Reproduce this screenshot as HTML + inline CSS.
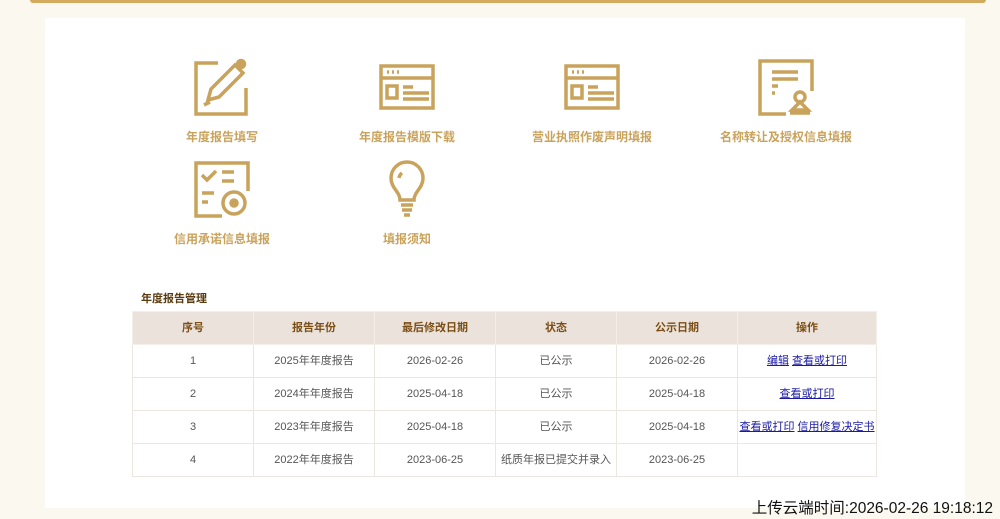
<!DOCTYPE html>
<html><head><meta charset="utf-8"><style>
*{margin:0;padding:0;box-sizing:border-box}
body{width:1000px;height:519px;background:#fbf8ef;font-family:"Liberation Sans","Noto Sans CJK SC",sans-serif;position:relative;overflow:hidden}
.bar{position:absolute;left:30px;top:0;width:956px;height:3px;background:#d4aa5e;border-radius:0 0 3px 3px}
.panel{position:absolute;left:45px;top:18px;width:920px;height:490px;background:#fff}
.item{position:absolute;width:200px;text-align:center;color:#c9a35c;font-size:12px;font-weight:bold}
.item svg{display:block;margin:0 auto}
.title{position:absolute;left:141px;top:290px;font-size:11px;font-weight:bold;color:#5a3a10}
table{position:absolute;left:132px;top:311px;border-collapse:collapse;font-size:11px;color:#555}
td,th{border:1px solid #ece6e0;text-align:center;height:33px;width:121px;padding:0;line-height:14px;vertical-align:middle}
th{background:#ebe3db;color:#7b4e16;font-weight:bold;border-color:#f3eee8}
th:last-child,td:last-child{width:139px}
a{color:#1a1aa6;text-decoration:underline}
.time{position:absolute;right:7px;top:496px;font-size:15.5px;color:#111}
</style></head><body>
<div class="bar"></div>
<div class="panel"></div>
<div class="item" style="left:122px;top:58px"><svg width="60" height="60" viewBox="0 0 60 60" fill="none" stroke="#c9a35c" stroke-width="3.5"><path d="M26 5H4v51h50V30"/><path d="M16 42l3-11 24-24 8 8-24 24z"/><path d="M12 47l6-3"/><circle cx="49" cy="6" r="3.5" fill="#c9a35c"/></svg><div style="margin-top:10px">年度报告填写</div></div>
<div class="item" style="left:307px;top:58px"><svg width="60" height="60" viewBox="0 0 60 60" fill="none" stroke="#c9a35c" stroke-width="3.5"><rect x="4" y="8" width="52" height="42"/><path d="M4 20h52M10 14h2M15 14h2M20 14h2M10 28h10v12H10zM26 29h10M26 35h26M26 41h26"/></svg><div style="margin-top:10px">年度报告模版下载</div></div>
<div class="item" style="left:492px;top:58px"><svg width="60" height="60" viewBox="0 0 60 60" fill="none" stroke="#c9a35c" stroke-width="3.5"><rect x="4" y="8" width="52" height="42"/><path d="M4 20h52M10 14h2M15 14h2M20 14h2M10 28h10v12H10zM26 29h10M26 35h26M26 41h26"/></svg><div style="margin-top:10px">营业执照作废声明填报</div></div>
<div class="item" style="left:686px;top:58px"><svg width="60" height="60" viewBox="0 0 60 60" fill="none" stroke="#c9a35c" stroke-width="3.5"><path d="M30 56H4V3h52v30"/><path d="M16 14h26M16 21h26M16 28h6M16 35h3"/><circle cx="44" cy="39" r="5"/><path d="M44 44l-8 8h16z M34 55h20"/></svg><div style="margin-top:10px">名称转让及授权信息填报</div></div>
<div class="item" style="left:122px;top:160px"><svg width="60" height="60" viewBox="0 0 60 60" fill="none" stroke="#c9a35c" stroke-width="3.5"><path d="M30 56H4V3h52v28"/><path d="M10 15l5 5 9-9M30 12h12M30 21h12M10 33h12M10 42h6"/><circle cx="42" cy="43" r="11"/><circle cx="42" cy="43" r="3" fill="#c9a35c"/></svg><div style="margin-top:10px">信用承诺信息填报</div></div>
<div class="item" style="left:307px;top:160px"><svg width="60" height="60" viewBox="0 0 60 60" fill="none" stroke="#c9a35c" stroke-width="3.5"><path d="M23 40c0-8-9-12-9-22a16 16 0 0 1 32 0c0 10-9 14-9 22z"/><path d="M25 13a8 8 0 0 0-3 5"/><path d="M24 45h12M25 50h10M27 55h6"/></svg><div style="margin-top:10px">填报须知</div></div>
<div class="title">年度报告管理</div>
<table>
<tr><th>序号</th><th>报告年份</th><th>最后修改日期</th><th>状态</th><th>公示日期</th><th>操作</th></tr>
<tr><td>1</td><td>2025年年度报告</td><td>2026-02-26</td><td>已公示</td><td>2026-02-26</td><td><a>编辑</a> <a>查看或打印</a></td></tr>
<tr><td>2</td><td>2024年年度报告</td><td>2025-04-18</td><td>已公示</td><td>2025-04-18</td><td><a>查看或打印</a></td></tr>
<tr><td>3</td><td>2023年年度报告</td><td>2025-04-18</td><td>已公示</td><td>2025-04-18</td><td><a>查看或打印</a> <a>信用修复决定书</a></td></tr>
<tr><td>4</td><td>2022年年度报告</td><td>2023-06-25</td><td>纸质年报已提交并录入</td><td>2023-06-25</td><td></td></tr>
</table>
<div class="time">上传云端时间:2026-02-26 19:18:12</div>
</body></html>
